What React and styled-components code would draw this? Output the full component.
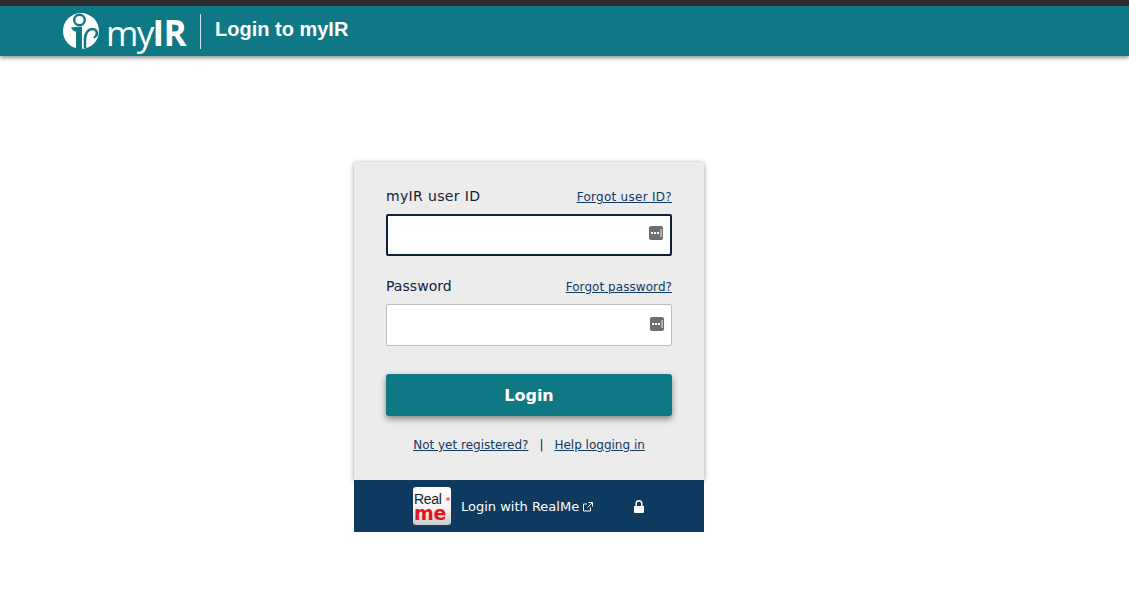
import React from "react";
import styled, { createGlobalStyle } from "styled-components";

const Global = createGlobalStyle`
  html, body { margin: 0; padding: 0; background: #fff; }
  body { font-family: "DejaVu Sans", Verdana, sans-serif; color: #12213a; }
  * { box-sizing: border-box; }
`;

const Page = styled.div`
  height: 603px;
  overflow: hidden;
  display: flex;
  flex-direction: column;
`;
const Header = styled.header`
  height: 56px;
  background: #0f7885;
  border-top: 6px solid #2b2b2f;
  box-shadow: 0 2px 4px rgba(0, 0, 0, 0.45);
  display: flex;
  align-items: center;
  padding-left: 63px;
`;
const Brand = styled.div`
  display: flex;
  align-items: center;
  width: 123px;
  gap: 7px;
`;
const BrandName = styled.span`
  font-family: "Open Sans", sans-serif;
  font-size: 35px;
  line-height: 40px;
  color: #fff;
  font-weight: 400;
  letter-spacing: -1.7px;
  margin-top: 3px;
  white-space: nowrap;
  b { font-weight: 700; letter-spacing: -0.6px; }
`;
const Divider = styled.div`
  width: 1px;
  height: 35px;
  background: #d7e6e8;
  margin: 0 14px;
  flex: none;
`;
const Title = styled.h1`
  margin: 0 0 4px;
  font-family: "Liberation Sans", Arial, sans-serif;
  font-size: 20px;
  font-weight: 700;
  color: #fff;
`;
const Main = styled.main`
  display: flex;
  justify-content: center;
  padding: 106px 71px 0 0;
`;
const Column = styled.div`
  width: 350px;
  display: flex;
  flex-direction: column;
`;
const Card = styled.div`
  height: 318px;
  background: #ececec;
  border-radius: 3px 3px 0 0;
  box-shadow: 0 1px 5px rgba(0, 0, 0, 0.4);
  padding: 24px 32px 0;
  display: flex;
  flex-direction: column;
`;
const LabelRow = styled.div`
  height: 20px;
  display: flex;
  justify-content: space-between;
  align-items: center;
  margin-bottom: 8px;
`;
const Label = styled.label`
  font-size: 14px;
  letter-spacing: ${(p) => p.$spacing}px;
  color: #12213a;
`;
const SmallLink = styled.a`
  font-size: 12px;
  letter-spacing: ${(p) => p.$spacing || 0}px;
  color: #12395f;
  text-decoration: underline;
  cursor: pointer;
`;
const RowLink = styled(SmallLink)`
  padding-top: 2px;
`;
const Field = styled.div`
  height: 42px;
  background: #fff;
  border-radius: 2px;
  border: ${(p) => (p.$focus ? "2px solid #12213a" : "1px solid #bdbdbd")};
  display: flex;
  align-items: center;
  justify-content: flex-end;
  padding-right: 7px;
  padding-bottom: ${(p) => (p.$focus ? "4px" : "3px")};
  margin-bottom: 20px;
`;
const Login = styled.button`
  height: 42px;
  margin-top: 8px;
  background: #0f7885;
  color: #fff;
  border: 0;
  border-radius: 3px;
  font-family: inherit;
  font-size: 16px;
  font-weight: 700;
  box-shadow: 0 3px 6px rgba(0, 0, 0, 0.45);
`;
const HelpRow = styled.div`
  margin-top: 20px;
  display: flex;
  justify-content: center;
  align-items: center;
  font-size: 12px;
  color: #12213a;
  gap: 11px;
  height: 18px;
`;
const RealMeBar = styled.div`
  height: 52px;
  background: #0f3a60;
  display: flex;
  align-items: center;
  padding-left: 59px;
  color: #fff;
  font-size: 13px;
`;
const RealMeLogo = styled.div`
  width: 38px;
  height: 38px;
  flex: none;
  border-radius: 3px;
  background: linear-gradient(#fdfdfd, #f3f3f3 60%, #c9c9c9);
  margin-right: 10px;
  padding: 7px 0 0 1px;
  display: flex;
  flex-direction: column;
  position: relative;
`;
const Real = styled.span`
  font-family: "Liberation Sans", Arial, sans-serif;
  color: #1c1c1c;
  font-size: 14px;
  line-height: 11px;
  letter-spacing: -0.3px;
`;
const Me = styled.span`
  font-family: "DejaVu Sans", sans-serif;
  color: #e2131b;
  font-size: 19px;
  font-weight: 700;
  letter-spacing: -0.2px;
  line-height: 14px;
  height: 14px;
  margin-top: 1px;
`;
const RealMeDot = styled.span`
  position: absolute;
  right: 1px;
  top: 10px;
  width: 4px;
  height: 4px;
  border-radius: 50%;
  background: #ee7a72;
`;
const RealMeText = styled.span`
  display: flex;
  align-items: center;
  gap: 4px;
  width: 173px;
  white-space: nowrap;
  padding-top: 1px;
`;

const Logo = () => (
  <svg width="36" height="36" viewBox="0 0 36 36" aria-hidden="true">
    <circle cx="18" cy="18" r="18" fill="#fff" />
    <circle cx="16.500" cy="7" r="5.300" fill="#fff" stroke="#0f7885" strokeWidth="2.400" />
    <path d="M8 14.500c3.500-.8 7.500-1 11-.8V36h-6V18.500c-2.200-.2-4-1.500-5-4z" fill="#0f7885" />
    <path d="M22 35V26c0-6 3.500-10 8-10 3 0 4.500 3 3.800 6.500" fill="none" stroke="#0f7885" strokeWidth="2.600" />
    <circle cx="28.500" cy="21" r="2.800" fill="#fff" />
    <path d="M30.500 25.500c2 0 3.500-1.500 4-3.500l-2-1c-.3 1.500-1 2.500-2 2.700z" fill="#0f7885" />
  </svg>
);

const Key = () => (
  <svg width="14" height="14" viewBox="0 0 14 14" aria-hidden="true">
    <rect width="14" height="14" rx="2" fill="#6f6f6f" />
    <path d="M2 6h2v2H2zM5 6h2v2H5zM8 6h2v2H8z" fill="#fff" />
    <rect x="11.500" y="3" width="1.200" height="8" fill="#ddd" />
  </svg>
);

const External = () => (
  <svg width="10" height="10" viewBox="0 0 10 10" fill="none" stroke="#fff" strokeWidth="1" aria-hidden="true">
    <path d="M7.500 5.500v3.500h-7v-7h3.500M5.500.5h4v4M9.500.5L4.500 5.500" />
  </svg>
);

const Lock = () => (
  <svg width="10" height="13" viewBox="0 0 10 13" aria-hidden="true">
    <path d="M0 6h10v6a1 1 0 0 1-1 1H1a1 1 0 0 1-1-1z" fill="#fff" />
    <path d="M2.200 6V3.600a2.800 2.800 0 0 1 5.600 0V6" fill="none" stroke="#fff" strokeWidth="1.500" />
  </svg>
);

export default function App() {
  return (
    <Page>
      <Global />
      <Header>
        <Brand>
          <Logo />
          <BrandName>my<b>IR</b></BrandName>
        </Brand>
        <Divider />
        <Title>Login to myIR</Title>
      </Header>
      <Main>
        <Column>
          <Card>
            <LabelRow>
              <Label $spacing={0.35}>myIR user ID</Label>
              <RowLink $spacing={0.28}>Forgot user ID?</RowLink>
            </LabelRow>
            <Field $focus><Key /></Field>
            <LabelRow>
              <Label $spacing={0.05}>Password</Label>
              <RowLink $spacing={0.06}>Forgot password?</RowLink>
            </LabelRow>
            <Field><Key /></Field>
            <Login>Login</Login>
            <HelpRow>
              <SmallLink>Not yet registered?</SmallLink>
              <span>|</span>
              <SmallLink>Help logging in</SmallLink>
            </HelpRow>
          </Card>
          <RealMeBar>
            <RealMeLogo>
              <Real>Real</Real>
              <Me>me</Me>
              <RealMeDot />
            </RealMeLogo>
            <RealMeText>Login with RealMe <External /></RealMeText>
            <Lock />
          </RealMeBar>
        </Column>
      </Main>
    </Page>
  );
}
